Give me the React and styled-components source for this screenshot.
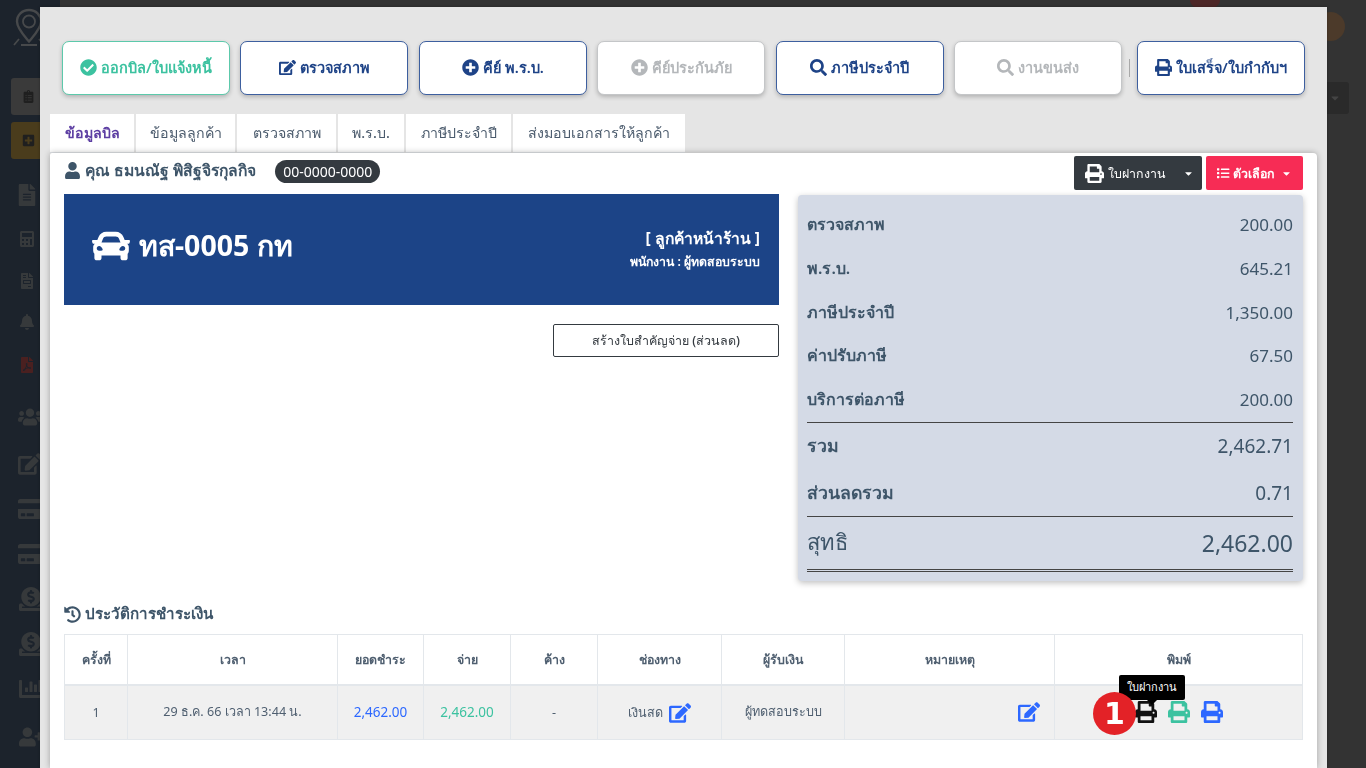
import React from 'react';
import styled, { createGlobalStyle } from 'styled-components';
import {
  FaCheckCircle, FaEdit, FaPlusCircle, FaSearch, FaPrint, FaCar, FaUser, FaHistory, FaList, FaCaretDown,
  FaClipboardList, FaPlusSquare, FaFileAlt, FaCalculator, FaFileInvoice, FaBell, FaFilePdf, FaUsers,
  FaCreditCard, FaDonate, FaChartBar, FaUserPlus,
} from 'react-icons/fa';

const Global = createGlobalStyle`
  html, body { margin: 0; padding: 0; height: 100%; overflow: hidden; }
  body { font-family: "Noto Sans", "Open Sans", "Liberation Sans", sans-serif; color: #3e5569; background: #333; }
  * { box-sizing: border-box; }
`;

const Page = styled.div`
  height: 768px; display: flex; background: #333; overflow: hidden;
`;
const Sidebar = styled.aside`
  width: 60px; background: #1c232c; display: flex; flex-direction: column; align-items: center;
  color: #3a3b3c; flex: none; padding-right: 6px;
`;
const SideLogo = styled.div`
  height: 54px; color: #47494b; display: flex; align-items: center; margin-bottom: 24px; margin-left: 4px;
`;
const SideSquare = styled.div`
  width: 46px; height: 37px; margin-bottom: 7px; margin-left: 14px; border-radius: 3px; background: ${p => p.$bg};
  color: #1f1f1f; display: flex; align-items: center; padding-left: 11px; font-size: 13px;
`;
const SideIcon = styled.div`
  height: ${p => p.$h}px; flex: none; display: flex; align-items: center; font-size: ${p => p.$s || 20}px;
  color: ${p => p.$c || '#36393b'}; margin-left: ${p => p.$m || 0}px;
`;
const Behind = styled.main`
  flex: 1; display: flex; justify-content: flex-end; padding: 82px 17px 0 0;
`;
const BehindSelect = styled.div`
  width: 40px; height: 32px; background: #2a2a2a; border-radius: 3px; color: #444; display: flex;
  align-items: center; justify-content: flex-end; padding-right: 8px; font-size: 12px;
`;
const OrangeDot = styled.div`
  position: absolute; left: 1316px; top: 12px; width: 29px; height: 29px; border-radius: 50%; background: #4c3a2a;
`;
const RedDot = styled.div`
  position: absolute; left: 1190px; top: -10px; width: 30px; height: 20px; border-radius: 50%; background: #4d2727;
`;

const Modal = styled.section`
  position: fixed; left: 40px; top: 7px; width: 1287px; height: 761px; background: #e5e5e5;
  padding: 34px 10px 0; display: flex; flex-direction: column; box-shadow: 0 0 3px rgba(0,0,0,.3);
`;
const ActionBar = styled.div`
  display: flex; align-items: center; padding: 0 12px; height: 54px;
`;
const ActionBtn = styled.div`
  width: 168px; height: 54px; background: #fff; border-radius: 7px; margin-right: 10.4px; flex: none;
  border: 1px solid ${p => p.$tone === 'green' ? '#5cc9ab' : p.$tone === 'off' ? '#c4c6c8' : '#3d5f9f'};
  color: ${p => p.$tone === 'green' ? '#3cc2a0' : p.$tone === 'off' ? '#b4b7ba' : '#1e4387'};
  box-shadow: 0 2px 4px rgba(0,0,0,.22);
  display: flex; align-items: center; justify-content: center; gap: 4px; padding-bottom: 2px;
  font-size: 14.5px; font-weight: 600; svg { font-size: 17px; flex: none; }
`;
const Divider = styled.div`
  width: 1px; height: 18px; background: #a9a9a9; margin: 0 7px 0 -3.4px; flex: none;
`;
const Tabs = styled.nav`
  display: flex; gap: 2px; margin-top: 19px; height: 39px; flex: none;
`;
const Tab = styled.div`
  width: ${p => p.$w}px; background: #fff; display: flex; align-items: center; justify-content: center;
  font-size: 14.2px; font-weight: ${p => p.$active ? 600 : 500}; color: ${p => p.$active ? '#5d3fa3' : '#4a5a6c'};
  border-bottom: 1px solid #e4e7eb;
`;
const Card = styled.div`
  flex: 1; background: #fff; padding: 3px 14px 0; border-radius: 2px 4px 0 0;
  box-shadow: 0 0 6px rgba(0,0,0,.3); min-height: 0; overflow: hidden; position: relative;
`;
const TitleRow = styled.div`
  display: flex; align-items: flex-start; height: 34px; margin-bottom: 4px;
`;
const CustomerName = styled.div`
  font-size: 15.7px; font-weight: 700; color: #3e5569; display: flex; align-items: center; gap: 4px; height: 28px;
  svg { font-size: 17px; }
`;
const Phone = styled.span`
  margin: 4px 0 0 19px; background: #343a40; color: #fff; border-radius: 12px; height: 23px; padding: 0 8px;
  font-size: 14px; display: flex; align-items: center; font-weight: 400;
`;
const Spacer = styled.div` flex: 1; `;
const SplitBtn = styled.div`
  width: 128px; height: 34px; background: #343a40; color: #fff; border-radius: 2px; display: flex;
  align-items: center; padding: 0 8px 0 11px; font-size: 12.4px; font-weight: 500; gap: 4px;
  svg:first-child { font-size: 19px; }
  svg:last-child { margin-left: auto; font-size: 11px; }
`;
const MenuBtn = styled.div`
  width: 97px; height: 34px; margin-left: 4px; background: #f72c55; color: #fff; border-radius: 2px; display: flex;
  align-items: center; justify-content: center; font-size: 12.4px; font-weight: 600; gap: 3px;
  svg:last-child { font-size: 11px; margin-left: 3px; }
`;
const Columns = styled.div`
  display: grid; grid-template-columns: 715px 505px; column-gap: 19px; height: 387px;
`;
const CarBanner = styled.div`
  height: 111px; background: #1c4487; color: #fff; display: flex; align-items: center; justify-content: space-between;
  padding: 0 19px 8px 28px;
`;
const Plate = styled.div`
  display: flex; align-items: center; gap: 9px; font-size: 28.5px; font-weight: 700;
  svg { font-size: 38px; }
`;
const Owner = styled.div`
  text-align: right; display: flex; flex-direction: column; gap: 1px; padding-top: 6px;
`;
const OwnerType = styled.div` font-size: 15.7px; font-weight: 700; `;
const OwnerStaff = styled.div` font-size: 12.3px; font-weight: 600; `;
const VoucherRow = styled.div`
  display: flex; justify-content: flex-end; margin-top: 19px;
`;
const VoucherBtn = styled.div`
  width: 226px; height: 33px; border: 1px solid #343a40; border-radius: 2px; background: #fff; color: #343a40;
  font-size: 12.5px; font-weight: 500; display: flex; align-items: center; justify-content: center;
`;
const Summary = styled.div`
  margin-top: 1px; height: 386px; background: #d4dae6; border-radius: 4px; padding: 8px 10px 0 9px;
  box-shadow: 0 2px 6px rgba(0,0,0,.25); color: #3e5569;
`;
const SumRow = styled.div`
  display: flex; justify-content: space-between; align-items: center; height: ${p => p.$h}px;
  font-size: ${p => p.$fs}px; font-weight: 400;
  span:first-child { font-size: ${p => p.$lfs}px; font-weight: ${p => p.$lw || 600}; }
  border-bottom: ${p => p.$border || 'none'};
`;
const HistoryTitle = styled.div`
  margin-top: 21px; height: 24px; font-size: 15.2px; font-weight: 700; display: flex; align-items: center; gap: 4px; color: #3e5569;
  svg { font-size: 17px; }
`;
const Table = styled.table`
  width: 1238px; margin-top: 8px; border-collapse: collapse; table-layout: fixed; font-size: 12.6px; color: #4f5f70;
  th, td { border: 1px solid #e3e7eb; text-align: center; padding: 0; }
  th { height: 50px; font-weight: 600; background: #fff; border-bottom-width: 2px; font-size: 12.4px; }
  td { height: 55px; background: #f0f0f0; }
`;
const Amount = styled.td` && { color: ${p => p.$c}; font-size: 13.5px; } `;
const Method = styled.div`
  display: flex; align-items: center; justify-content: center; gap: 6px; padding-top: 2px;
`;
const LinkIcon = styled.span`
  color: ${p => p.$c || '#2d68ff'}; font-size: ${p => p.$s || 22}px; display: inline-flex;
`;
const NoteCell = styled.div`
  display: flex; justify-content: flex-end; padding-right: 14px;
`;
const PrintCell = styled.div`
  position: relative; display: flex; gap: 11px; padding-left: 80px; align-items: center; height: 53px;
`;
const Tip = styled.div`
  position: absolute; left: 64px; top: -11px; width: 66px; height: 25px; background: #000; color: #fff; border-radius: 2px;
  font-size: 11px; display: flex; align-items: center; justify-content: center;
  &::after {
    content: ""; position: absolute; left: 28px; bottom: -5px; border: 5px solid transparent;
    border-bottom: 0; border-top-color: #000;
  }
`;
const Marker = styled.div`
  position: absolute; left: 38px; top: 6px; width: 43px; height: 43px; border-radius: 50%; background: #e32227;
  color: #fff; font: 700 30px "DejaVu Sans", sans-serif; display: flex; align-items: center; justify-content: center;
`;

const PinLogo = () => (
  <svg width="34" height="38" viewBox="0 0 34 38" fill="none" stroke="currentColor" strokeWidth="2.4">
    <path d="M17 2C10 2 5 7 5 13.5c0 7 7 14 12 20 5-6 12-13 12-20C29 7 24 2 17 2z" />
    <circle cx="17" cy="13.5" r="6" strokeWidth="1.8" />
    <path d="M2 37l5-6M32 37l-5-6M9 37h16" strokeWidth="1.8" />
  </svg>
);

const actions = [
  { t: 'ออกบิล/ใบแจ้งหนี้', i: FaCheckCircle, tone: 'green' },
  { t: 'ตรวจสภาพ', i: FaEdit },
  { t: 'คีย์ พ.ร.บ.', i: FaPlusCircle },
  { t: 'คีย์ประกันภัย', i: FaPlusCircle, tone: 'off' },
  { t: 'ภาษีประจำปี', i: FaSearch },
  { t: 'งานขนส่ง', i: FaSearch, tone: 'off' },
];
const tabs = [
  ['ข้อมูลบิล', 84, true], ['ข้อมูลลูกค้า', 99], ['ตรวจสภาพ', 99], ['พ.ร.บ.', 66], ['ภาษีประจำปี', 105], ['ส่งมอบเอกสารให้ลูกค้า', 172],
];
const rows = [['ตรวจสภาพ', '200.00'], ['พ.ร.บ.', '645.21'], ['ภาษีประจำปี', '1,350.00'], ['ค่าปรับภาษี', '67.50']];
const heads = [['ครั้งที่', 63], ['เวลา', 210], ['ยอดชำระ', 86], ['จ่าย', 87], ['ค้าง', 87], ['ช่องทาง', 124], ['ผู้รับเงิน', 123], ['หมายเหตุ', 210], ['พิมพ์', 248]];

export default function App() {
  return (
    <>
      <Global />
      <Page>
        <Sidebar>
          <SideLogo><PinLogo /></SideLogo>
          <SideSquare $bg="#3a3a3a"><FaClipboardList /></SideSquare>
          <SideSquare $bg="#4a3c1c"><FaPlusSquare /></SideSquare>
          <SideIcon $h={58} $s={22}><FaFileAlt /></SideIcon>
          <SideIcon $h={30} $s={16}><FaCalculator /></SideIcon>
          <SideIcon $h={54} $s={16}><FaFileInvoice /></SideIcon>
          <SideIcon $h={28} $s={16}><FaBell /></SideIcon>
          <SideIcon $h={58} $s={16} $c="#4a2020"><FaFilePdf /></SideIcon>
          <SideIcon $h={46} $s={24} $m={6}><FaUsers /></SideIcon>
          <SideIcon $h={48} $s={24} $m={6}><FaEdit /></SideIcon>
          <SideIcon $h={42} $s={26} $m={8}><FaCreditCard /></SideIcon>
          <SideIcon $h={48} $s={26} $m={8}><FaCreditCard /></SideIcon>
          <SideIcon $h={42} $s={24} $m={8}><FaDonate /></SideIcon>
          <SideIcon $h={48} $s={24} $m={8}><FaDonate /></SideIcon>
          <SideIcon $h={42} $s={24} $m={8}><FaChartBar /></SideIcon>
          <SideIcon $h={54} $s={24} $m={8}><FaUserPlus /></SideIcon>
        </Sidebar>
        <Behind><BehindSelect><FaCaretDown /></BehindSelect></Behind>
        <RedDot />
        <OrangeDot />
      </Page>
      <Modal>
        <ActionBar>
          {actions.map(a => (
            <ActionBtn key={a.t} $tone={a.tone}><a.i />{a.t}</ActionBtn>
          ))}
          <Divider />
          <ActionBtn><FaPrint />ใบเสร็จ/ใบกำกับฯ</ActionBtn>
        </ActionBar>
        <Tabs>
          {tabs.map(([t, w, a]) => <Tab key={t} $w={w} $active={a}>{t}</Tab>)}
        </Tabs>
        <Card>
          <TitleRow>
            <CustomerName><FaUser />คุณ ธมนณัฐ พิสิฐจิรกุลกิจ</CustomerName>
            <Phone>00-0000-0000</Phone>
            <Spacer />
            <SplitBtn><FaPrint />ใบฝากงาน<FaCaretDown /></SplitBtn>
            <MenuBtn><FaList />ตัวเลือก<FaCaretDown /></MenuBtn>
          </TitleRow>
          <Columns>
            <div>
              <CarBanner>
                <Plate><FaCar />ทส-0005 กท</Plate>
                <Owner>
                  <OwnerType>[ ลูกค้าหน้าร้าน ]</OwnerType>
                  <OwnerStaff>พนักงาน : ผู้ทดสอบระบบ</OwnerStaff>
                </Owner>
              </CarBanner>
              <VoucherRow><VoucherBtn>สร้างใบสำคัญจ่าย (ส่วนลด)</VoucherBtn></VoucherRow>
            </div>
            <Summary>
              {rows.map(([l, v]) => <SumRow key={l} $h={43.7} $fs={17} $lfs={16}><span>{l}</span><span>{v}</span></SumRow>)}
              <SumRow $h={45} $fs={17} $lfs={16} $border="1px solid #444"><span>บริการต่อภาษี</span><span>200.00</span></SumRow>
              <SumRow $h={47} $fs={19} $lfs={17.7}><span>รวม</span><span>2,462.71</span></SumRow>
              <SumRow $h={47} $fs={19} $lfs={17.7} $border="1px solid #444"><span>ส่วนลดรวม</span><span>0.71</span></SumRow>
              <SumRow $h={55} $fs={23} $lfs={22} $lw={500} $border="3px double #444"><span>สุทธิ</span><span>2,462.00</span></SumRow>
            </Summary>
          </Columns>
          <HistoryTitle><FaHistory />ประวัติการชำระเงิน</HistoryTitle>
          <Table>
            <colgroup>{heads.map(([h, w]) => <col key={h} width={w} />)}</colgroup>
            <thead><tr>{heads.map(([h]) => <th key={h}>{h}</th>)}</tr></thead>
            <tbody>
              <tr>
                <td>1</td>
                <td>29 ธ.ค. 66 เวลา 13:44 น.</td>
                <Amount $c="#2d68ff">2,462.00</Amount>
                <Amount $c="#3cc2a0">2,462.00</Amount>
                <td>-</td>
                <td><Method>เงินสด<LinkIcon><FaEdit /></LinkIcon></Method></td>
                <td>ผู้ทดสอบระบบ</td>
                <td><NoteCell><LinkIcon><FaEdit /></LinkIcon></NoteCell></td>
                <td>
                  <PrintCell>
                    <LinkIcon $c="#111"><FaPrint /></LinkIcon>
                    <LinkIcon $c="#3cc2a0"><FaPrint /></LinkIcon>
                    <LinkIcon><FaPrint /></LinkIcon>
                    <Tip>ใบฝากงาน</Tip>
                    <Marker>1</Marker>
                  </PrintCell>
                </td>
              </tr>
            </tbody>
          </Table>
        </Card>
      </Modal>
    </>
  );
}
